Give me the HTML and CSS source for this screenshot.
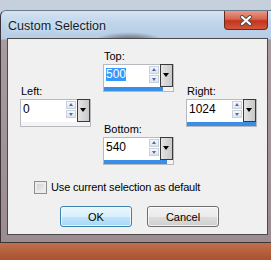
FILE: index.html
```html
<!DOCTYPE html>
<html lang="en">
  <head>
    <meta charset="UTF-8" />
    <title>Custom Selection</title>
    <link rel="stylesheet" href="styles.css">
  </head>
  <body>
    <div class="window">
      <div class="titlebar">
        <span class="title">Custom Selection</span>
        <div class="close">
          <svg width="14" height="11" viewBox="0 0 14 11">
            <path d="M3 2 L11 9 M11 2 L3 9" stroke="#4a4a4a" stroke-width="4" stroke-linecap="round" />
            <path d="M3 2 L11 9 M11 2 L3 9" stroke="#ffffff" stroke-width="2.2" stroke-linecap="round" />
          </svg>
        </div>
      </div>

      <div class="client">
        <div class="fields">
          <div class="col col-side">
            <div class="group">
              <label class="caption">Left:</label>
              <div class="spin">
                <div class="field"><span class="value">0</span><span class="arrows"><span class="up"></span><span class="down"></span></span></div>
                <div class="drop"></div>
                <div class="bar"><span class="fill" style="width: 0%"></span></div>
              </div>
            </div>
          </div>

          <div class="col col-mid">
            <div class="group">
              <label class="caption">Top:</label>
              <div class="spin">
                <div class="field"><span class="value selected">500</span><span class="arrows"><span class="up"></span><span class="down"></span></span></div>
                <div class="drop"></div>
                <div class="bar"><span class="fill" style="width: 85%"></span></div>
              </div>
            </div>
            <div class="group group-bottom">
              <label class="caption">Bottom:</label>
              <div class="spin">
                <div class="field"><span class="value">540</span><span class="arrows"><span class="up"></span><span class="down"></span></span></div>
                <div class="drop"></div>
                <div class="bar"><span class="fill" style="width: 91%"></span></div>
              </div>
            </div>
          </div>

          <div class="col col-side">
            <div class="group">
              <label class="caption">Right:</label>
              <div class="spin">
                <div class="field"><span class="value">1024</span><span class="arrows"><span class="up"></span><span class="down"></span></span></div>
                <div class="drop"></div>
                <div class="bar"><span class="fill" style="width: 100%"></span></div>
              </div>
            </div>
          </div>
        </div>

        <label class="check"><span class="checkbox"></span>Use current selection as default</label>

        <div class="buttons">
          <button class="btn btn-default">OK</button>
          <button class="btn">Cancel</button>
        </div>
      </div>
    </div>
  </body>
</html>
```

FILE: styles.css
```css
html,
body {
  margin: 0;
  height: 100%;
  overflow: hidden;
}

body {
  background: linear-gradient(#c5d0dc 0, #c5d0dc 10px, #c0704a 243px, #a8522f 260px);
  font-family: "Liberation Sans", Arial, sans-serif;
  font-size: 11px;
  color: #000;
}

.window {
  margin-top: 10px;
  width: 276px;
  height: 233px;
  box-sizing: border-box;
  padding: 0 7px 7px 6px;
  border-radius: 6px 6px 0 0;
  border: 1px solid #3c3438;
  border-top-color: #6a7a8a;
  background:
    radial-gradient(ellipse 38px 12px at 128px 33px, rgba(50, 36, 36, 0.95), rgba(60, 40, 40, 0) 100%),
    linear-gradient(#d4e3f2 0, #bcd3ea 14px, #b5cce4 28px, #a89ca0 29px, #9a8c90 100%);
  display: flex;
  flex-direction: column;
}

.titlebar {
  height: 27px;
  display: flex;
  align-items: flex-start;
  justify-content: space-between;
}

.title {
  margin-top: 8px;
  margin-left: 1px;
  font-size: 12.5px;
  color: #141c28;
  text-shadow: 0 0 5px rgba(255, 255, 255, 0.9);
}

.close {
  width: 44px;
  height: 19px;
  box-sizing: border-box;
  border: 1px solid #6a2a22;
  border-top: none;
  border-radius: 0 0 4px 4px;
  background: linear-gradient(#e69a88 0, #d8644e 45%, #c2341e 55%, #d2563a 100%);
  display: flex;
  align-items: center;
  justify-content: center;
}

.client {
  flex: 1;
  background: #f0f0f0;
  border: 1px solid #4a4a4a;
  padding: 0 0 0 12px;
}

.fields {
  display: flex;
  gap: 12px;
}

.col {
  width: 71px;
  display: flex;
  flex-direction: column;
}

.col-side {
  padding-top: 46px;
}

.col-mid {
  padding-top: 11px;
}

.caption {
  display: block;
  line-height: 13px;
  height: 13px;
  margin-bottom: 1px;
  padding-left: 1px;
}

.group-bottom {
  margin-top: 31px;
}

.spin {
  display: grid;
  grid-template-columns: 1fr 13px;
  grid-template-rows: 22px 4px;
  width: 71px;
  box-sizing: border-box;
  border: 1px solid #b6babe;
  background: #ffffff;
}

.field {
  display: flex;
  align-items: center;
  justify-content: space-between;
  padding-left: 2px;
}

.value {
  font-size: 12px;
  line-height: 13px;
  margin-top: -4px;
}

.value.selected {
  background: #3399ff;
  color: #ffffff;
}

.arrows {
  display: flex;
  flex-direction: column;
  gap: 1px;
  margin-right: 1px;
  margin-top: 1px;
  align-self: flex-start;
}

.up,
.down {
  width: 10px;
  height: 8px;
  box-sizing: border-box;
  border: 1px solid #c8d0dc;
  background: linear-gradient(#f6f8fc, #dde4ee);
  position: relative;
}

.up::after,
.down::after {
  content: "";
  position: absolute;
  left: 2px;
  border-left: 2px solid transparent;
  border-right: 2px solid transparent;
}

.up::after {
  top: 1px;
  border-bottom: 3px solid #5068b8;
}

.down::after {
  top: 2px;
  border-top: 3px solid #5068b8;
}

.drop {
  grid-row: 1;
  grid-column: 2;
  margin-top: -1px;
  height: 23px;
  box-sizing: border-box;
  border: 1px solid #3a3a3a;
  background: linear-gradient(90deg, #e4e4e4, #c8c8c8);
  position: relative;
}

.drop::after {
  content: "";
  position: absolute;
  left: 2px;
  top: 8px;
  border-left: 3.5px solid transparent;
  border-right: 3.5px solid transparent;
  border-top: 4px solid #000;
}

.bar {
  grid-row: 2;
  grid-column: 1 / 3;
  background: #f4f4f4;
}

.fill {
  display: block;
  height: 100%;
  background: #3a8ee6;
}

.check {
  display: flex;
  align-items: center;
  gap: 4px;
  margin: 16px 0 0 14px;
  height: 13px;
  line-height: 13px;
  letter-spacing: -0.15px;
}

.checkbox {
  width: 13px;
  height: 13px;
  box-sizing: border-box;
  border: 1px solid #8e8f8f;
  background: linear-gradient(135deg, #cbcbcb, #f6f6f6);
  box-shadow: inset 0 0 0 2px #ececec;
}

.buttons {
  display: flex;
  gap: 15px;
  margin: 12px 0 0 40px;
}

.btn {
  width: 72px;
  height: 21px;
  padding: 0;
  border: 1px solid #707070;
  border-radius: 3px;
  font-family: "Liberation Sans", Arial, sans-serif;
  font-size: 11px;
  color: #000;
  background: linear-gradient(#f2f2f2 0, #ebebeb 50%, #dddddd 50%, #cfcfcf 100%);
  box-shadow: inset 0 0 0 1px rgba(255, 255, 255, 0.7);
}

.btn-default {
  border-color: #3c7fb1;
  background: linear-gradient(#eaf6fd 0, #d9f0fc 50%, #bee6fd 50%, #a7d9f5 100%);
}
```
